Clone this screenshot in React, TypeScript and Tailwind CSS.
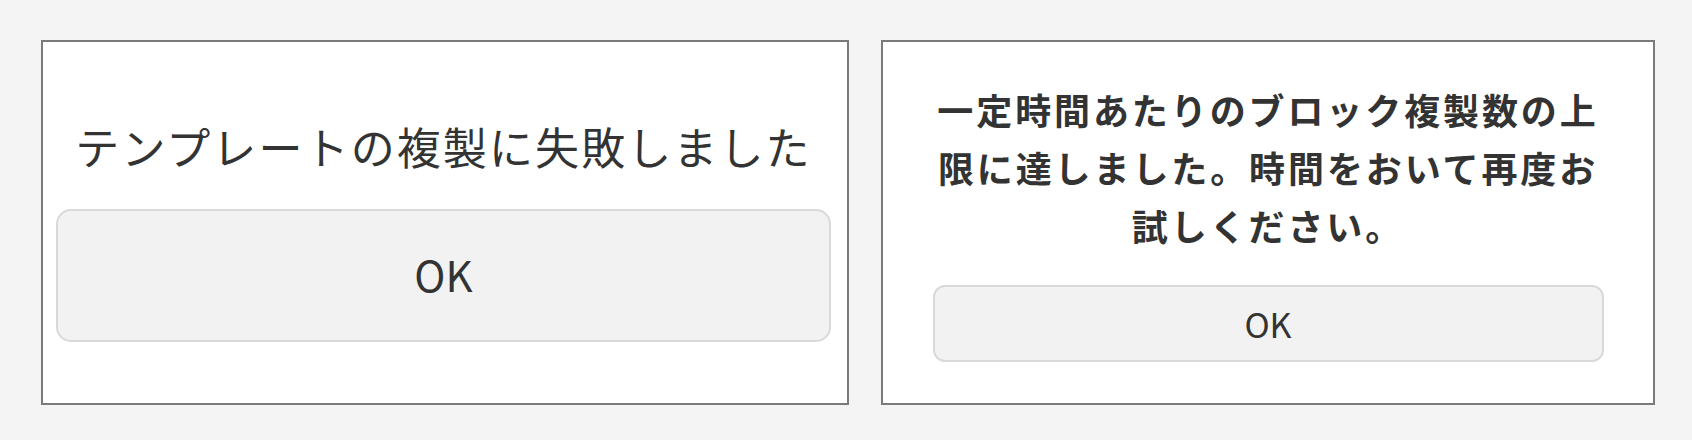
import React from 'react';

const font = { fontFamily: '"Noto Sans CJK JP", "Noto Sans", sans-serif' };

const App: React.FC = () => {
  return (
    <div
      className="w-[1692px] h-[440px] bg-[#f4f4f4] flex items-start gap-[32px] pt-[40px] pl-[41px] text-[#333333]"
      style={font}
    >
      {/* template copy failed */}
      <div className="w-[808px] h-[365px] bg-white border-2 border-[#7a7a7a] flex flex-col pl-[13px] pr-[16px]">
        <p className="mt-[74px] h-[60px] leading-[60px] text-[44px] tracking-[2.1px] text-center">
          テンプレートの複製に失敗しました
        </p>
        <button className="mt-[33px] h-[133px] w-full rounded-[15px] bg-[#f2f2f2] border-2 border-[#d9d9d9] text-[42px] leading-none text-[#333333] pb-[3px]">
          OK
        </button>
      </div>

      {/* rate limit */}
      <div className="w-[774px] h-[365px] bg-white border-2 border-[#7a7a7a] flex flex-col items-center">
        <p className="mt-[38px] w-[680px] leading-[58px] text-[36px] font-bold tracking-[2.9px] text-center text-[#333333]">
          一定時間あたりのブロック複製数の上限に達しました。時間をおいて再度お試しください。
        </p>
        <button className="mt-[31px] h-[77px] w-[671px] rounded-[12px] bg-[#f2f2f2] border-2 border-[#d9d9d9] text-[34px] leading-none text-[#333333]">
          OK
        </button>
      </div>
    </div>
  );
};

export default App;
